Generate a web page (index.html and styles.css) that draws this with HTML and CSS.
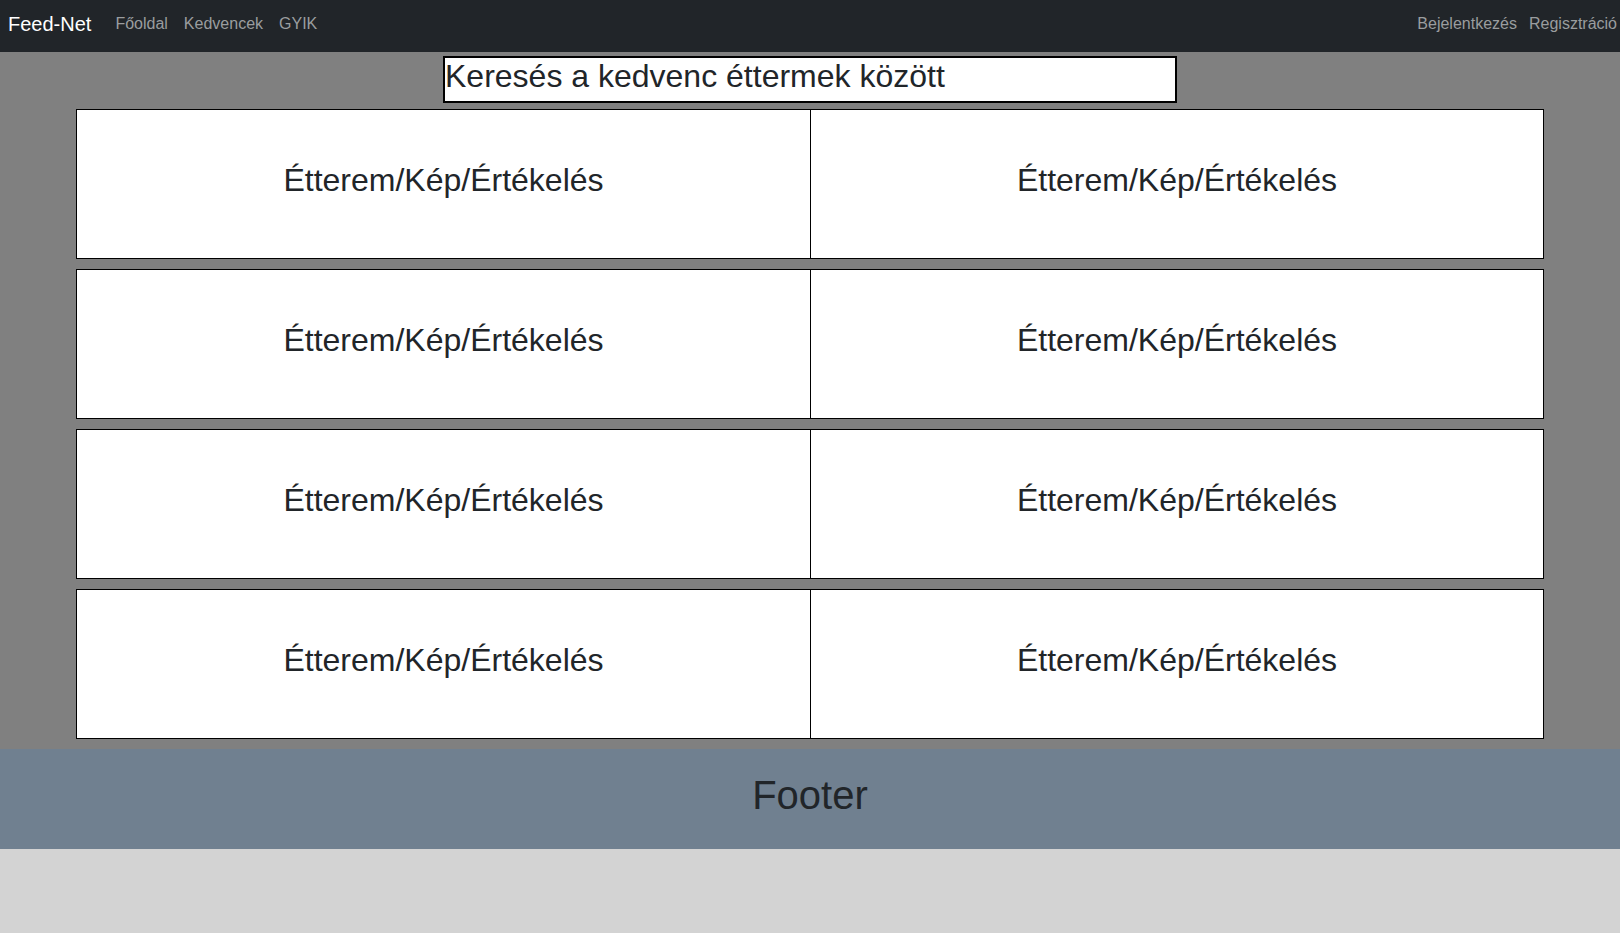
FILE: index.html
```html
<!DOCTYPE html>
<html lang="hu">
<head>
<meta charset="utf-8">
<title>Feed-Net</title>
<link rel="stylesheet" href="styles.css">
</head>
<body>
<nav class="navbar">
  <a class="brand" href="#">Feed-Net</a>
  <ul class="nav-left">
    <li><a class="nav-link" href="#">Főoldal</a></li>
    <li><a class="nav-link" href="#">Kedvencek</a></li>
    <li><a class="nav-link" href="#">GYIK</a></li>
  </ul>
  <ul class="nav-right">
    <li><a class="nav-link-r" href="#">Bejelentkezés</a></li>
    <li><a class="nav-link-r" href="#">Regisztráció</a></li>
  </ul>
</nav>
<main class="main">
  <div class="search-wrap">
    <input class="search" type="text" value="Keresés a kedvenc éttermek között">
  </div>
  <div class="grid">
    <div class="row"><div class="cell">Étterem/Kép/Értékelés</div><div class="cell">Étterem/Kép/Értékelés</div></div>
    <div class="row"><div class="cell">Étterem/Kép/Értékelés</div><div class="cell">Étterem/Kép/Értékelés</div></div>
    <div class="row"><div class="cell">Étterem/Kép/Értékelés</div><div class="cell">Étterem/Kép/Értékelés</div></div>
    <div class="row"><div class="cell">Étterem/Kép/Értékelés</div><div class="cell">Étterem/Kép/Értékelés</div></div>
  </div>
</main>
<footer class="footer">
  <h1 class="footer-title">Footer</h1>
</footer>
</body>
</html>
```
FILE: styles.css
```css
* { box-sizing: border-box; }
html, body { margin: 0; padding: 0; }
body {
  background: #d3d3d3;
  font-family: "Liberation Sans", Arial, sans-serif;
  color: #212529;
  font-size: 16px;
}
.navbar {
  display: flex;
  align-items: flex-start;
  height: 52px;
  padding: 4px 3px 0 8px;
  background: #212529;
}
.brand {
  font-size: 20px;
  line-height: 30px;
  padding: 5px 0;
  margin-right: 16px;
  color: #fff;
  text-decoration: none;
  white-space: nowrap;
}
.nav-left, .nav-right {
  display: flex;
  list-style: none;
  margin: 0;
  padding: 0;
}
.nav-right { margin-left: auto; }
.nav-link {
  display: block;
  padding: 8px 8px;
  line-height: 24px;
  color: #9a9d9f;
  text-decoration: none;
}
.nav-link-r {
  display: block;
  padding: 8px 0 8px 12px;
  line-height: 24px;
  color: #9a9d9f;
  text-decoration: none;
}
.main {
  background: #808080;
  padding: 4px 76px 10px;
}
.search-wrap {
  display: flex;
  justify-content: center;
  margin-bottom: 6px;
}
.search {
  width: 734px;
  height: 47px;
  border: 2px solid #000;
  border-radius: 0;
  padding: 0 0 6px 0;
  margin: 0;
  background: #fff;
  font-family: "Liberation Sans", Arial, sans-serif;
  font-size: 32px;
  color: #212529;
  outline: none;
}
.grid {
  display: flex;
  flex-direction: column;
  gap: 10px;
}
.row {
  display: grid;
  grid-template-columns: 1fr 1fr;
  height: 150px;
  border: 1px solid #000;
  background: #fff;
}
.cell {
  display: flex;
  align-items: center;
  justify-content: center;
  padding-bottom: 9px;
  font-size: 32px;
  line-height: 38px;
}
.cell + .cell { border-left: 1px solid #000; }
.footer {
  background: #708090;
  padding: 22px 0;
  text-align: center;
}
.footer-title {
  margin: 0 0 8px;
  font-size: 40px;
  font-weight: 400;
  line-height: 48px;
  color: #212529;
}
```
